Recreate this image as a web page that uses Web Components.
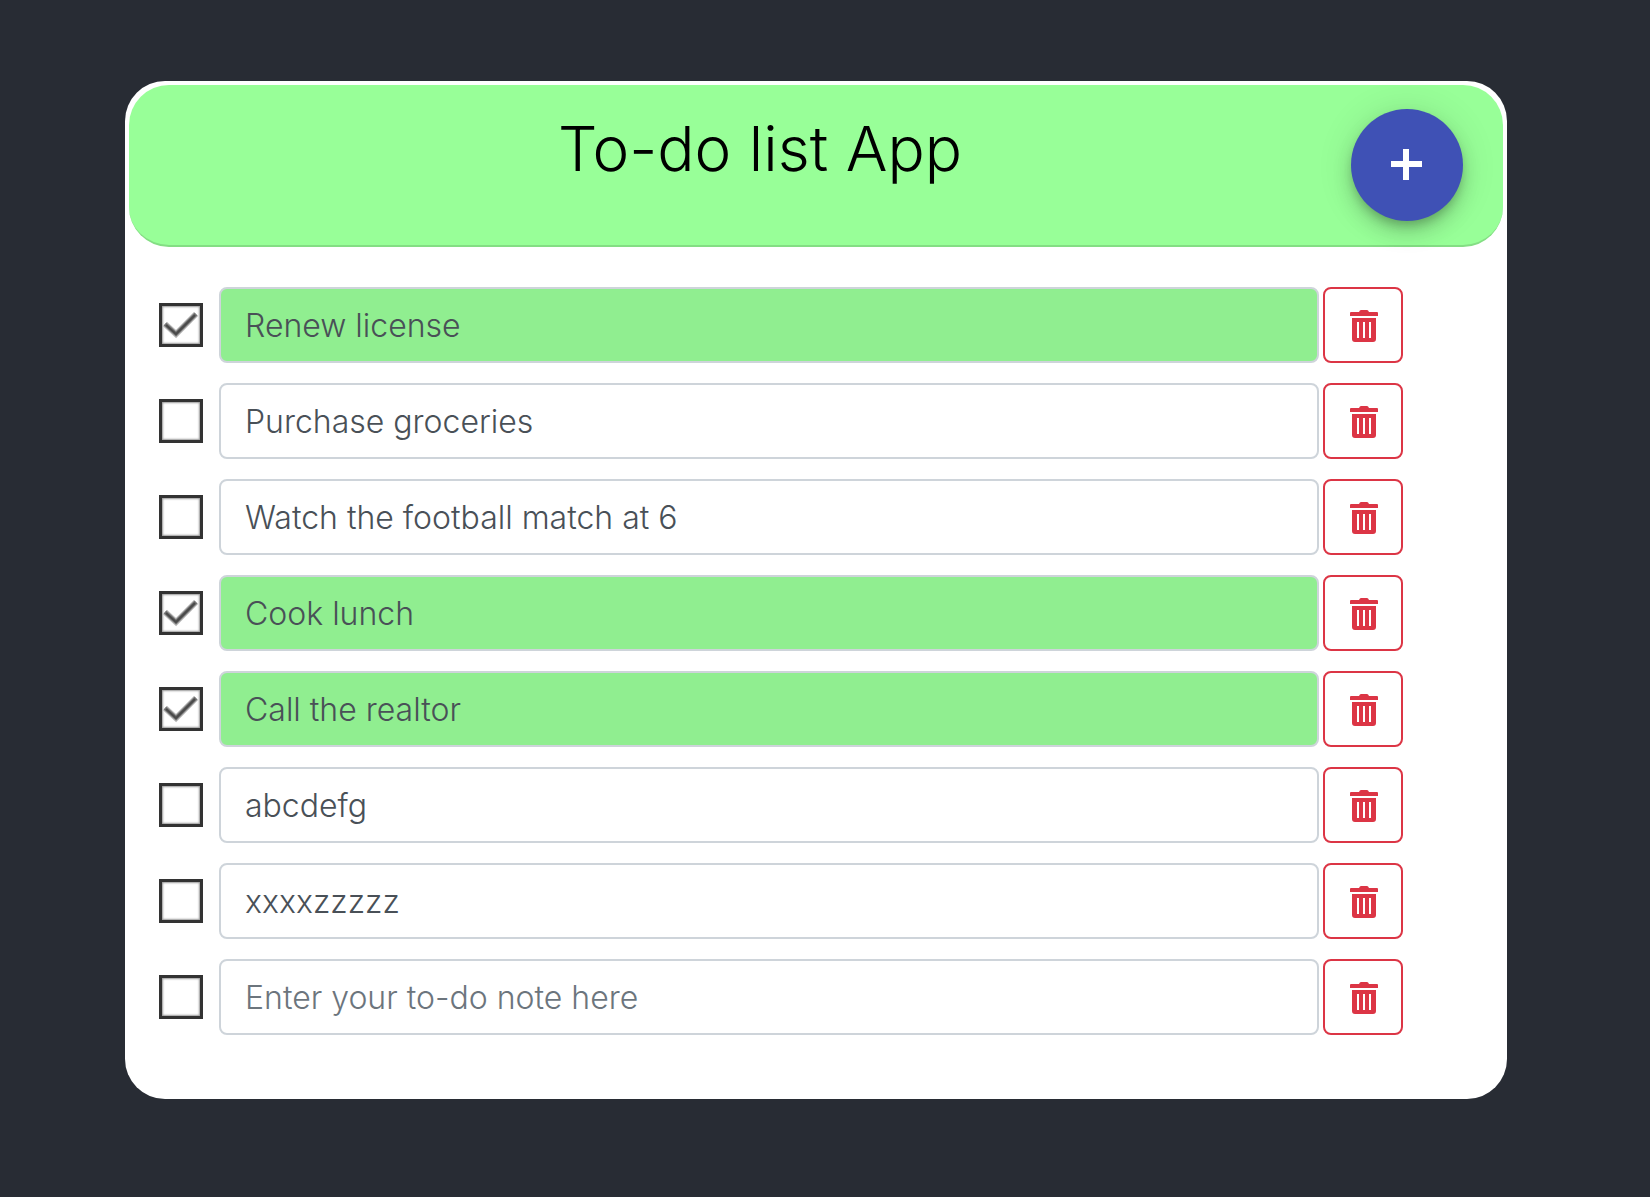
<!DOCTYPE html>
<html lang="en">
<head>
<meta charset="utf-8">
<title>To-do list App</title>
<style>
  html { background: #282c34; }
  body { margin: 0; background: #282c34; font-family: Inter, "Liberation Sans", sans-serif; }
</style>
</head>
<body>
<todo-app>
  <todo-header slot="header">To-do list App</todo-header>
  <todo-item text="Renew license" done></todo-item>
  <todo-item text="Purchase groceries"></todo-item>
  <todo-item text="Watch the football match at 6"></todo-item>
  <todo-item text="Cook lunch" done></todo-item>
  <todo-item text="Call the realtor" done></todo-item>
  <todo-item text="abcdefg"></todo-item>
  <todo-item text="xxxxzzzzz"></todo-item>
  <todo-item></todo-item>
</todo-app>

<template id="app-template">
  <style>
    :host { display: block; box-sizing: border-box; min-height: 100vh; padding: 81px 143px 98px 125px; }
    main { background: #fff; border-radius: 40px; padding: 4px; }
    .list { display: flex; flex-direction: column; gap: 20px; padding: 40px 100px 60px 30px; }
  </style>
  <main>
    <slot name="header"></slot>
    <div class="list"><slot></slot></div>
  </main>
</template>

<template id="header-template">
  <style>
    :host { display: block; }
    header { display: flex; align-items: flex-start; background: #98ff98; border-bottom: 2px solid #84de84; border-radius: 40px; padding: 24px 40px; }
    h1 { flex: 1; margin: 0; text-align: center; font-size: 62px; line-height: 80px; font-weight: 350; color: #000; }
    button { display: grid; place-items: center; width: 112px; height: 112px; padding: 0; border: 0; border-radius: 50%; background: #3f51b5; cursor: pointer;
      box-shadow: 0 6px 10px -2px rgba(0,0,0,.2), 0 12px 20px rgba(0,0,0,.14), 0 2px 36px rgba(0,0,0,.12); }
    svg { display: block; width: 32px; height: 32px; }
  </style>
  <header>
    <h1><slot></slot></h1>
    <button type="button" aria-label="Add item">
      <svg viewBox="0 0 32 32" fill="#fff" aria-hidden="true"><path d="M12 0h6v12h13v6H18v13h-6V18H0v-6h12z"/></svg>
    </button>
  </header>
</template>

<template id="item-template">
  <style>
    :host { display: flex; align-items: center; }
    label { display: grid; width: 44px; height: 44px; margin-right: 16px; flex: none; }
    label > * { grid-area: 1 / 1; }
    .check { appearance: none; margin: 0; width: 44px; height: 44px; border: 3px solid #333; background: #fff; box-shadow: inset 0 0 2px 1px #999; }
    label svg { width: 44px; height: 44px; pointer-events: none; visibility: hidden; }
    .check:checked + svg { visibility: visible; }
    .text { flex: 1; min-width: 0; box-sizing: border-box; height: 76px; margin: 0 4px 0 0; padding: 12px 24px; border: 2px solid #ced4da; border-radius: 8px; background: #fff; color: #495057; font: inherit; font-size: 32px; font-weight: 300; line-height: 48px; outline: 0; }
    .text::placeholder { color: #6c757d; opacity: 1; }
    :host([done]) .text { background: #90ee90; }
    button { flex: none; display: grid; place-items: center; box-sizing: border-box; width: 80px; height: 76px; padding: 2px 0 0 2px; border: 2px solid #dc3545; border-radius: 8px; background: #fff; color: #dc3545; cursor: pointer; }
    button svg { display: block; width: 28px; height: 32px; }
  </style>
  <label>
    <input class="check" type="checkbox" aria-label="Done">
    <svg viewBox="0 0 44 44" fill="none" aria-hidden="true"><path d="M6 21L17 31L37 11" stroke="#bbb" stroke-width="6"/><path d="M6 21L17 31L37 11" stroke="#777" stroke-width="4"/><path d="M7 22L17 31L36 12" stroke="#4a4a4a" stroke-width="2"/></svg>
  </label>
  <input class="text" type="text" aria-label="To-do note" placeholder="Enter your to-do note here">
  <button type="button" aria-label="Delete">
    <svg viewBox="0 0 28 32" fill="currentColor" aria-hidden="true"><path d="M0 3a1 1 0 0 1 1-1h8q.8-2 2-2h6q1.200 0 2 2h8a1 1 0 0 1 1 1v3H0z"/><path fill-rule="evenodd" d="M2 8h24v21a3 3 0 0 1-3 3H5a3 3 0 0 1-3-3zM7 12v16h2V12zM13 12v16h2V12zM19 12v16h2V12z"/></svg>
  </button>
</template>

<script>
  class TemplateElement extends HTMLElement {
    constructor() {
      super();
      const template = document.getElementById(this.constructor.templateId);
      this.attachShadow({ mode: "open" }).append(template.content.cloneNode(true));
    }
  }

  class TodoApp extends TemplateElement {
    static templateId = "app-template";
    connectedCallback() {
      this.addEventListener("add-item", () => this.append(document.createElement("todo-item")));
    }
  }

  class TodoHeader extends TemplateElement {
    static templateId = "header-template";
    connectedCallback() {
      this.shadowRoot.querySelector("button").onclick = () =>
        this.dispatchEvent(new CustomEvent("add-item", { bubbles: true }));
    }
  }

  class TodoItem extends TemplateElement {
    static templateId = "item-template";
    connectedCallback() {
      const check = this.shadowRoot.querySelector(".check");
      check.checked = this.hasAttribute("done");
      check.onchange = () => this.toggleAttribute("done", check.checked);
      this.shadowRoot.querySelector(".text").value = this.getAttribute("text") || "";
      this.shadowRoot.querySelector("button").onclick = () => this.remove();
    }
  }

  customElements.define("todo-app", TodoApp);
  customElements.define("todo-header", TodoHeader);
  customElements.define("todo-item", TodoItem);
</script>
</body>
</html>
